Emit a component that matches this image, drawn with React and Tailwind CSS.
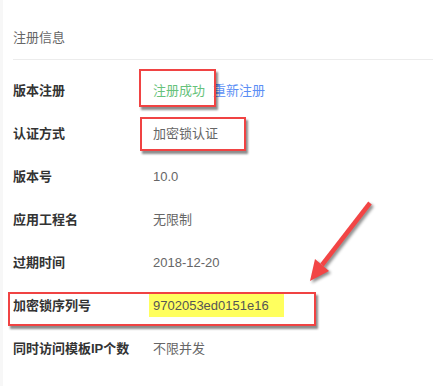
import React from 'react';

const rows = [
  { label: '版本注册', value: 'reg' },
  { label: '认证方式', value: '加密锁认证' },
  { label: '版本号', value: '10.0' },
  { label: '应用工程名', value: '无限制' },
  { label: '过期时间', value: '2018-12-20' },
  { label: '加密锁序列号', value: 'serial' },
  { label: '同时访问模板IP个数', value: '不限并发' },
];

function Value({ value }) {
  if (value === 'reg') {
    return (
      <span>
        <span className="text-[#66c27a]">注册成功</span>
        <span className="text-[#5b8ef5] ml-[8px]">重新注册</span>
      </span>
    );
  }
  if (value === 'serial') {
    return (
      <span className="inline-flex items-center h-[23px] w-[135px] -ml-[4px] pl-[4px] bg-[#ffff5e] text-[#555]">
        9702053ed0151e16
      </span>
    );
  }
  return <span className="text-[#666]">{value}</span>;
}

function RedBox({ className }) {
  return (
    <div
      className={`absolute border-2 border-[#f04343] shadow-[2px_3px_2px_rgba(0,0,0,0.45)] ${className}`}
    />
  );
}

export default function App() {
  return (
    <div
      className="relative w-[433px] h-[386px] bg-white overflow-hidden border-l-[3px] border-[#f7f7f7]"
      style={{ fontFamily: '"Liberation Sans", "Noto Sans CJK SC", sans-serif' }}
    >
      <div className="ml-[10px]">
        <div className="h-[60px] pt-[29px] leading-[18px] text-[13px] text-[#666] border-b border-[#ececec]">
          注册信息
        </div>
        <div className="pt-[9px]">
          {rows.map((r) => (
            <div key={r.label} className="flex items-center h-[43px] text-[13px]">
              <div className="w-[140px] font-bold text-[#333]">{r.label}</div>
              <Value value={r.value} />
            </div>
          ))}
        </div>
      </div>

      {/* annotations */}
      <RedBox className="left-[136px] top-[69px] w-[77px] h-[38px]" />
      <RedBox className="left-[137px] top-[117px] w-[106px] h-[34px]" />
      <RedBox className="left-[5px] top-[292px] w-[308px] h-[34px]" />

      <svg
        className="absolute left-0 top-0"
        width="433"
        height="386"
        style={{ filter: 'drop-shadow(2px 2px 1.5px rgba(0,0,0,0.45))' }}
      >
        <line x1="367" y1="203" x2="319" y2="265" stroke="#f24545" strokeWidth="4.5" />
        <polygon points="307,281 326,271 312,259" fill="#f24545" />
      </svg>
    </div>
  );
}
